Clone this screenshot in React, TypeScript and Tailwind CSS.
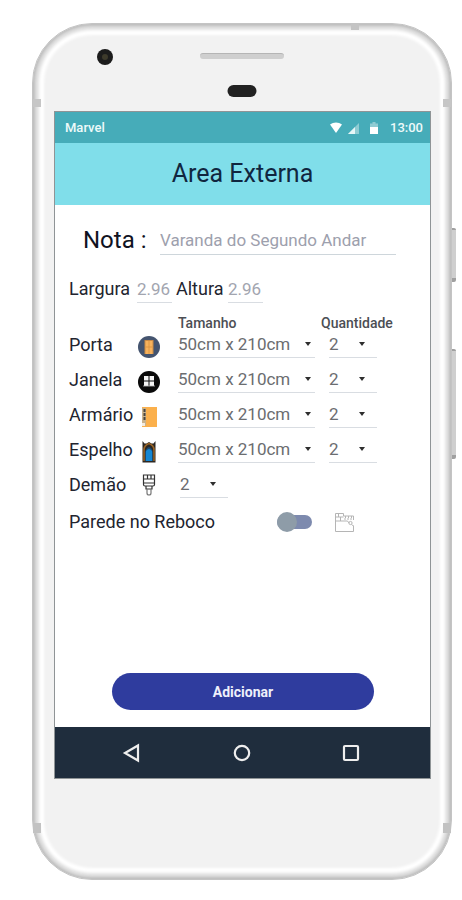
import { useState } from "react";
import type { ReactNode } from "react";

type Opening = {
  id: string;
  label: string;
  icon: ReactNode;
};

function DoorIcon() {
  return (
    <svg viewBox="0 0 22 22" className="size-[22px]" aria-hidden="true">
      <circle cx="11" cy="11" r="11" fill="#44546f" />
      <rect x="6.5" y="4" width="9" height="14" fill="#c98a45" />
      <rect x="7.5" y="5" width="7" height="13" fill="#f7b25c" />
      <path d="M11 5v13M7.5 11h7" stroke="#d9923f" strokeWidth="0.8" />
    </svg>
  );
}

function WindowIcon() {
  return (
    <svg viewBox="0 0 22 22" className="size-[22px]" aria-hidden="true">
      <circle cx="11" cy="11" r="11" fill="#0a0a0a" />
      <path d="M6 5h4.500v4.500H6zM11.500 5H16v4.500h-4.500zM6 10.500h4.500V15H6zM11.500 10.500H16V15h-4.500z" fill="#f5f5f5" />
      <path d="M5 15h12" stroke="#bdbdbd" strokeWidth="0.8" />
    </svg>
  );
}

function CabinetIcon() {
  return (
    <svg viewBox="0 0 22 22" className="size-[22px]" aria-hidden="true">
      <rect x="4" y="1" width="15" height="20" fill="#fbb04c" />
      <rect x="4" y="2" width="4" height="18" fill="#c9b28c" />
      <path d="M6.500 3v12" stroke="#4a443d" strokeWidth="2" strokeDasharray="3 1" />
      <path d="M4 17h3v3H4z" fill="#f3ece0" />
    </svg>
  );
}

function MirrorIcon() {
  return (
    <svg viewBox="0 0 22 22" className="size-[22px]" aria-hidden="true">
      <path d="M4.500 0l2 2.500h2L11 1l2.500 1.500h2l2-2.500v21.500h-13z" fill="#2b2723" />
      <path d="M6 20V9c0-3.400 2-5.500 5-6.500 3 1 5 3.100 5 6.500v11" fill="none" stroke="#9a6425" strokeWidth="1.600" />
      <path d="M7.400 20V10.500c0-2 1.400-3.500 3.600-4.500 2.200 1 3.600 2.500 3.600 4.500V20z" fill="#1c4a70" />
      <path d="M7.800 20v-9c0-1.300 1.300-2.300 3.200-3 1.900.7 3.200 1.700 3.200 3v9z" fill="#1486d2" />
    </svg>
  );
}

function BrushIcon() {
  return (
    <svg viewBox="0 0 22 22" className="size-[22px]" fill="none" stroke="#333" strokeWidth="1.200" aria-hidden="true">
      <path d="M5.500 1h11v9.500c0 1-.7 1.500-1.500 1.500H7c-.8 0-1.500-.5-1.500-1.500z" fill="#fff" />
      <path d="M5.500 5h11M5.500 9h11M9.500 1v4M13 1v4" />
      <path d="M8 12v3h6v-3" />
      <path d="M9 15v4a2 2 0 0 0 4 0v-4" stroke="#777" />
    </svg>
  );
}

function WallIcon() {
  return (
    <svg viewBox="0 0 22 22" className="size-[22px]" fill="none" stroke="#b5b5b5" strokeWidth="1" aria-hidden="true">
      <path d="M1.500 20.500v-18h8v2.500h10v4M1.500 20.500h18v-6" />
      <path d="M1.500 6h8M4.500 2.500V6M6.500 6v4M1.500 10h12l1.500 2" />
      <path d="M11.500 5v3M14.500 5v3M17.500 5v3M10 8h9.500" strokeDasharray="2 1" />
      <circle cx="16.500" cy="12" r="1.600" />
      <path d="M17.500 13.500l2 1.500" />
    </svg>
  );
}

const openings: Opening[] = [
  { id: "porta", label: "Porta", icon: <DoorIcon /> },
  { id: "janela", label: "Janela", icon: <WindowIcon /> },
  { id: "armario", label: "Armário", icon: <CabinetIcon /> },
  { id: "espelho", label: "Espelho", icon: <MirrorIcon /> }
];

const sizes = ["50cm x 210cm", "60cm x 210cm", "70cm x 210cm", "80cm x 210cm"];
const quantities = ["1", "2", "3", "4"];

function SelectField({
  id,
  label,
  options,
  initial,
  arrow = "near"
}: {
  id: string;
  label: string;
  options: string[];
  initial: string;
  arrow?: "near" | "far";
}) {
  return (
    <div className="grid h-full w-full grid-cols-1 grid-rows-1 border-b border-[#d9dde2]">
      <select
        id={id}
        aria-label={label}
        defaultValue={initial}
        className="col-start-1 row-start-1 w-full cursor-pointer appearance-none bg-transparent text-[17px] leading-6 text-[#6b6d70] outline-none"
      >
        {options.map((option) => (
          <option key={option}>{option}</option>
        ))}
      </select>
      <svg
        viewBox="0 0 6 4"
        className={
          arrow === "far"
            ? "pointer-events-none col-start-1 row-start-1 mr-1 h-1 w-1.5 self-center justify-self-end"
            : "pointer-events-none col-start-1 row-start-1 mr-3 h-1 w-1.5 self-center justify-self-end"
        }
        aria-hidden="true"
      >
        <path d="M0 0h6L3 4z" fill="#2e2e2e" />
      </svg>
    </div>
  );
}

function StatusBar() {
  return (
    <div className="flex h-[31px] shrink-0 items-center justify-between bg-[#46acb9] pr-[7px] pl-[10px] text-[13px] font-medium text-[#eefafa]">
      <span>Marvel</span>
      <div className="flex items-center">
        <svg viewBox="0 0 12 12" className="mr-1.5 size-3" aria-hidden="true">
          <path d="M0 2.500C3.500-.3 8.500-.3 12 2.500L6 11z" fill="#fff" />
        </svg>
        <svg viewBox="0 0 12 12" className="mr-2.5 size-3" aria-hidden="true">
          <path d="M11 1v11H0z" fill="#8fccd3" />
          <path d="M7 5v7H0z" fill="#e6f6f7" />
        </svg>
        <svg viewBox="0 0 8 12" className="mr-3 h-3 w-2" aria-hidden="true">
          <path d="M2.500 0h3v1.500H8V5H0V1.500h2.500z" fill="#8fccd3" />
          <path d="M0 5h8v7H0z" fill="#fff" />
        </svg>
        <span>13:00</span>
      </div>
    </div>
  );
}

function NavBar() {
  return (
    <nav className="flex h-[51px] shrink-0 items-center justify-between bg-[#1f2d3d] pr-[69px] pl-[66px]">
      <button type="button" aria-label="Voltar">
        <svg viewBox="0 0 20 20" className="size-5" fill="none" stroke="#eee" strokeWidth="2.200" aria-hidden="true">
          <path d="M17 2.500v15L4 10z" />
        </svg>
      </button>
      <button type="button" aria-label="Início">
        <svg viewBox="0 0 20 20" className="size-5" fill="none" stroke="#eee" strokeWidth="2.200" aria-hidden="true">
          <circle cx="11" cy="10" r="7.200" />
        </svg>
      </button>
      <button type="button" aria-label="Recentes">
        <svg viewBox="0 0 20 20" className="size-5" fill="none" stroke="#eee" strokeWidth="2.200" aria-hidden="true">
          <rect x="3" y="3" width="14" height="14" rx="1" />
        </svg>
      </button>
    </nav>
  );
}

function AreaForm() {
  const [note, setNote] = useState("");
  const [plaster, setPlaster] = useState(false);

  return (
    <form
      className="flex flex-1 flex-col bg-white pr-[34px] pb-[17px] pl-[14px] text-lg text-[#22242f]"
      onSubmit={(event) => event.preventDefault()}
    >
      <div className="mt-5 flex h-[30px] items-center pl-[14px]">
        <label htmlFor="nota" className="w-[77px] shrink-0 text-2xl whitespace-nowrap text-[#10121f]">
          Nota :
        </label>
        <input
          id="nota"
          value={note}
          onChange={(event) => setNote(event.target.value)}
          placeholder="Varanda do Segundo Andar"
          className="h-full min-w-0 flex-1 border-b border-[#ced6db] text-[17px] outline-none placeholder:text-[#9da0ad]"
        />
      </div>

      <div className="mt-5 flex h-7 items-center">
        <label htmlFor="largura" className="w-[68px]">
          Largura
        </label>
        <input
          id="largura"
          placeholder="2.96"
          className="mr-1 h-full w-[35px] border-b border-[#d9dde2] text-[17px] outline-none placeholder:text-[#a2a5af]"
        />
        <label htmlFor="altura" className="w-[52px]">
          Altura
        </label>
        <input
          id="altura"
          placeholder="2.96"
          className="h-full w-[35px] border-b border-[#d9dde2] text-[17px] outline-none placeholder:text-[#a2a5af]"
        />
      </div>

      <div className="mt-3 grid grid-cols-[69px_40px_minmax(0,1fr)_75px] text-sm leading-4 font-medium text-[#4c4e54]">
        <span className="col-start-3">Tamanho</span>
        <span>Quantidade</span>
      </div>

      <div className="flex flex-col gap-2">
        {openings.map((opening) => (
          <div
            key={opening.id}
            className="grid h-[27px] grid-cols-[69px_40px_minmax(0,1fr)_75px] grid-rows-[27px] items-center"
          >
            <label htmlFor={`${opening.id}-tamanho`} className="leading-7">
              {opening.label}
            </label>
            <span className="pt-1">{opening.icon}</span>
            <div className="h-full pr-1.5">
              <SelectField
                id={`${opening.id}-tamanho`}
                label={`${opening.label} tamanho`}
                options={sizes}
                initial="50cm x 210cm"
                arrow="far"
              />
            </div>
            <div className="h-full w-14 pl-2">
              <SelectField
                id={`${opening.id}-quantidade`}
                label={`${opening.label} quantidade`}
                options={quantities}
                initial="2"
              />
            </div>
          </div>
        ))}
        <div className="grid h-[27px] grid-cols-[69px_42px_48px] grid-rows-[27px] items-center">
          <label htmlFor="demao" className="leading-7">
            Demão
          </label>
          <BrushIcon />
          <SelectField id="demao" label="Demão" options={quantities} initial="2" />
        </div>
      </div>

      <div className="mt-2.5 flex h-7 items-center">
        <label htmlFor="reboco" className="flex-1">
          Parede no Reboco
        </label>
        <input
          id="reboco"
          type="checkbox"
          role="switch"
          checked={plaster}
          onChange={(event) => setPlaster(event.target.checked)}
          className="flex h-[14px] w-[35px] cursor-pointer appearance-none items-center rounded-full bg-[#7d8aae] before:size-5 before:shrink-0 before:rounded-full before:bg-[#8e9ca8] checked:justify-end"
        />
        <span className="mr-10 ml-[22px]">
          <WallIcon />
        </span>
      </div>

      <button
        type="submit"
        className="mt-auto mr-[22px] ml-[43px] h-[37px] rounded-full bg-[#2f3c9e] text-sm font-bold text-[#eef0fa]"
      >
        Adicionar
      </button>
    </form>
  );
}

function PhoneFrame({ children }: { children: ReactNode }) {
  return (
    <div className="relative flex flex-1 flex-col rounded-[60px] border border-[#c4c4c4] bg-[#f2f2f2] pt-[87px] pr-5 pb-[100px] pl-[21px] shadow-[inset_0_0_3px_2px_#bcbcbc,inset_0_0_3px_6px_#e2e2e2,inset_0_0_3px_11px_#ffffff]">
      {/* camera, speaker and sensor */}
      <div className="absolute top-[25px] left-16 flex size-4 items-center justify-center rounded-full bg-[#1c1c1c]">
        <span className="size-1.5 rounded-full bg-[#3d3a2b]" />
      </div>
      <div className="absolute top-[29px] left-1/2 h-1.5 w-[84px] -translate-x-1/2 rounded-full border-t border-[#b5b5b5] bg-[#cfcfcf]" />
      <div className="absolute top-[61px] left-1/2 h-3 w-[29px] -translate-x-1/2 rounded-full bg-[#222]" />

      {/* antenna bands */}
      <div className="absolute top-0 right-[92px] h-1.5 w-2 bg-[#c4c4c4]" />
      <div className="absolute top-[75px] left-0 h-2 w-2 bg-[#c6c6c6]" />
      <div className="absolute top-[75px] right-0 h-2 w-2 bg-[#c6c6c6]" />
      <div className="absolute bottom-[46px] left-0 h-2.5 w-2 bg-[#c2c2c2]" />
      <div className="absolute right-0 bottom-[46px] h-2.5 w-2 bg-[#c2c2c2]" />

      {/* side buttons */}
      <div className="absolute top-[204px] -right-[5px] h-[54px] w-1 rounded-r-xs border-t-2 border-b-4 border-[#a0a0a0] bg-[#cfcfcf]" />
      <div className="absolute top-[325px] -right-[5px] h-[110px] w-1 rounded-r-xs border-t-2 border-b-4 border-[#a0a0a0] bg-[#cfcfcf]" />

      <div className="flex flex-1 flex-col border border-[#8f9496]">{children}</div>
    </div>
  );
}

export default function App() {
  return (
    <main className="flex min-h-screen flex-col bg-white pt-[23px] pr-[10px] pb-5 pl-8 font-[Roboto,sans-serif]">
      <PhoneFrame>
        <StatusBar />
        <header className="flex h-[62px] shrink-0 items-center justify-center bg-[#80deea]">
          <h1 className="text-[25px] text-[#10263f]">Area Externa</h1>
        </header>
        <AreaForm />
        <NavBar />
      </PhoneFrame>
    </main>
  );
}
